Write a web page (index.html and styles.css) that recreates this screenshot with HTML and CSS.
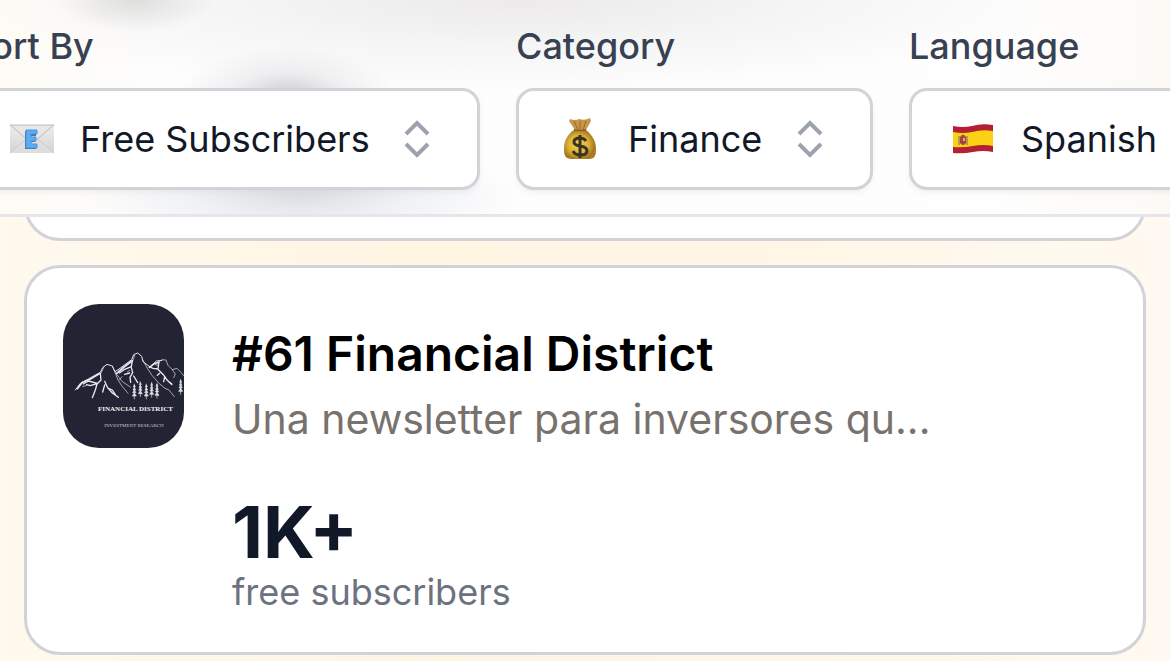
FILE: index.html
```html
<!DOCTYPE html>
<html lang="en">
<head>
<meta charset="utf-8">
<meta name="viewport" content="width=device-width, initial-scale=1">
<title>Newsletters</title>
<link rel="stylesheet" href="styles.css">
</head>
<body>
<header class="filters">
  <form class="filter-row">
    <div class="field">
      <label class="field-label" for="sort">Sort By</label>
      <div class="picker">
        <svg class="emoji" viewBox="0 0 48 48" aria-hidden="true">
          <defs><linearGradient id="paper" x2="0" y2="1"><stop stop-color="#efefef"/><stop offset="1" stop-color="#d3d3d4"/></linearGradient></defs>
          <path d="M2 10h44v28H2z" fill="url(#paper)"/>
          <path d="M2 38 18 24h12l16 14" fill="#dededf" stroke="#cfcecc"/>
          <path d="M2 10l19 16q3 2 6 0l19-16z" fill="#e7e7e8" stroke="#bdbcba"/>
          <path d="M17 16h11v5h-6v2h5v4h-5v3h6v4H17z" fill="#4a7196"/>
          <path d="M18 15h11v4h-6v3h5v4h-5v3h6v4H18z" fill="#5aacf5" stroke="#4a93d6"/>
        </svg>
        <select class="picker-select" id="sort"><option>Free Subscribers</option></select>
        <svg class="chevrons" viewBox="0 0 60 60" aria-hidden="true"><path d="M19 25 30 14 41 25M19 35 30 46 41 35"/></svg>
      </div>
    </div>
    <div class="field">
      <label class="field-label" for="category">Category</label>
      <div class="picker">
        <svg class="emoji" viewBox="0 0 48 48" aria-hidden="true">
          <defs><radialGradient id="gold" cx=".45" cy=".5"><stop stop-color="#f5d34b"/><stop offset=".65" stop-color="#dcb034"/><stop offset="1" stop-color="#a87a22"/></radialGradient></defs>
          <path d="M18 15C12 19 8 25 8 34c0 8 2 10 9 10h15c6 0 8-2 8-10 0-9-5-15-10-19z" fill="url(#gold)"/>
          <path d="M14 4q5 2 9 0 6 2 11-1l1 3-5 9H19L13 6z" fill="#c8964a"/>
          <path d="M18 6l4 9M24 6v9M30 6l-3 9" stroke="#99672c" fill="none"/>
          <path d="M18 14q5 2 12 0v2H18z" fill="#8c5a22"/>
          <path d="M30 26q-2-3-6-3-6 0-6 4 0 3 6 4 7 1 7 5 0 4-7 4-5 0-7-4M24 20v23" fill="none" stroke="#3c3322" stroke-width="3"/>
        </svg>
        <select class="picker-select" id="category"><option>Finance</option></select>
        <svg class="chevrons" viewBox="0 0 60 60" aria-hidden="true"><path d="M19 25 30 14 41 25M19 35 30 46 41 35"/></svg>
      </div>
    </div>
    <div class="field">
      <label class="field-label" for="language">Language</label>
      <div class="picker">
        <svg class="emoji" viewBox="0 0 48 48" aria-hidden="true">
          <path d="M4 11q10 2 19 0 10-3 21-1v27q-10-2-20 0-10 2-20 1z" fill="#b51f34"/>
          <path d="M4 17q10 2 19 0 10-3 21-1v15q-10-2-20 0-10 2-20 1z" fill="#fbd116"/>
          <path d="M10 21v9M18 21v9" stroke="#b3994f" stroke-width="2"/>
          <path d="M11 22h6v6q-3 4-6 0z" fill="#a6443b"/>
          <path d="M11 22q3-5 6 0z" fill="#8c6125"/>
          <path d="M14 23h2v3h-2z" fill="#d9a78a"/>
        </svg>
        <select class="picker-select" id="language"><option>Spanish</option></select>
        <svg class="chevrons" viewBox="0 0 60 60" aria-hidden="true"><path d="M19 25 30 14 41 25M19 35 30 46 41 35"/></svg>
      </div>
    </div>
  </form>
</header>
<main class="list">
  <article class="card card-passed"></article>
  <article class="card">
    <svg class="avatar" viewBox="39 42 363 432" role="img" aria-label="Financial District logo">
      <path fill="#222434" d="M39 42h363v432H39z"/>
      <g fill="none" stroke="#e8e8ee" stroke-linecap="round" stroke-linejoin="round">
        <path stroke-width="3" d="M76 300 92 279 115 267 151 247 158 233 171 223 187 228 195 245 210 235 245 209 251 194 263 189 275 199 279 215 300 231 319 213 336 211"/>
        <path stroke-width="5" d="M82 296 96 278 120 268 150 250M200 250 222 231 246 213M298 232 313 221 328 216"/>
        <path stroke-width="2" d="M187 228 195 247 204 270 215 287 234 310M195 247 217 275 241 291M279 211 292 235 306 256 326 279 345 295 357 300 373 320M336 209 348 210 354 226 367 239 381 235 394 248 402 258M367 239 376 252 371 263"/>
        <path stroke-width="4" d="M151 251 153 270 141 282 136 300 127 323M142 280 116 273 100 282M141 281 121 287 110 284M164 274 173 293 187 309 205 322M164 285 158 306M173 294 187 300 196 314M247 211 244 230 222 239 208 249M244 233 248 248 240 262 242 277M251 258 263 278M239 249 224 253M326 220 324 237 309 235 300 231M325 239 340 254 352 271 366 284M329 250 322 256M344 260 341 275M353 272 365 281"/>
        <path stroke-width="2" d="M162 230 153 250M254 196 248 214M98 290 110 286M208 270 216 260M232 246 239 241M316 224 326 226"/>
      </g>
      <g fill="#dedfe5" stroke="#dedfe5" stroke-width="2">
        <path id="tree" d="M253 281v47M253 284l-3 7h6zM253 292l-4 8h8zM253 300l-5 8h10zM253 309l-6 9h12z"/>
        <use href="#tree" x="18" y="-7"/><use href="#tree" x="36"/><use href="#tree" x="52" y="-5"/><use href="#tree" x="68" y="-2"/><use href="#tree" x="139" y="-14"/>
      </g>
      <text class="logo-name" x="144" y="364">FINANCIAL DISTRICT</text>
      <text class="logo-tag" x="163" y="412">INVESTMENT RESEARCH</text>
    </svg>
    <div class="details">
      <h2 class="title">#61 Financial District</h2>
      <p class="summary">Una newsletter para inversores qu...</p>
      <p class="count">1K+</p>
      <p class="unit">free subscribers</p>
    </div>
  </article>
</main>
</body>
</html>
```
FILE: styles.css
```css
* {
  box-sizing: border-box;
}

body {
  margin: 0;
  min-height: 100vh;
  overflow-x: hidden;
  font-family: Inter, "Liberation Sans", sans-serif;
  background: linear-gradient(90deg, #fff9ee, #fff5e3 35%, #fff6e6 65%, #fff9f1);
}

h2,
p {
  margin: 0;
}

.filters {
  position: sticky;
  top: 0;
  z-index: 1;
  overflow: hidden;
  padding: 22px 24px 24px 0;
  border-bottom: 3px solid #e5e6ea;
  background:
    radial-gradient(ellipse 110px 50px at 288px 96px, #cdced0, rgb(222 223 225 / 45%) 50%, transparent),
    radial-gradient(ellipse 220px 50px at 300px 196px, #dcdfe3, rgb(232 234 238 / 60%) 50%, transparent),
    radial-gradient(ellipse 80px 32px at 135px 0, #dededd, transparent),
    radial-gradient(ellipse 560px 90px at 520px 0, #eceaeb, rgb(242 241 242 / 70%) 50%, transparent),
    linear-gradient(90deg, #fffcf6, #fdfdfe 15%, #fefefe 85%, #fdfaf6);
}

.filter-row {
  display: flex;
  gap: 36px;
  margin-left: -32px;
}

.field {
  flex: none;
}

.field-label {
  display: block;
  margin-bottom: 18px;
  font-size: 36px;
  font-weight: 500;
  line-height: 48px;
  color: #374151;
}

.picker {
  display: flex;
  align-items: center;
  padding: 18px 30px 18px 37px;
  border: 3px solid #d1d3d9;
  border-radius: 18px;
  background: #fff;
  box-shadow: 0 3px 6px rgb(0 0 0 / 5%);
}

.emoji {
  flex: none;
  width: 48px;
  height: 48px;
}

.picker-select {
  appearance: none;
  margin: 0 0 0 24px;
  padding: 0;
  border: 0;
  background: none;
  font: 400 36px/60px Inter, "Liberation Sans", sans-serif;
  height: 60px;
  color: #111827;
}

.chevrons {
  flex: none;
  width: 60px;
  height: 60px;
  margin-left: 17px;
  fill: none;
  stroke: #9ca3af;
  stroke-width: 4;
}

.list {
  display: grid;
  gap: 24px;
  padding: 0 24px;
}

.card {
  display: flex;
  align-items: flex-start;
  gap: 48px;
  padding: 36px;
  border: 3px solid #d1d3d9;
  border-radius: 36px;
  background: #fff;
}

.card-passed {
  margin-top: -54px;
}

.avatar {
  flex: none;
  width: 121px;
  height: 144px;
  border-radius: 36px;
}

.logo-name {
  font: 700 21px "Liberation Serif", serif;
  fill: #f2f2f5;
}

.logo-tag {
  font: 400 15px "Liberation Serif", serif;
  fill: #c9cad2;
}

.details {
  min-width: 0;
  padding-top: 18px;
}

.title {
  font-size: 48px;
  font-weight: 600;
  line-height: 64px;
  color: #000;
}

.summary {
  margin-bottom: 44px;
  font-size: 41px;
  line-height: 66px;
  color: #78716c;
}

.count {
  font-size: 72px;
  font-weight: 700;
  line-height: 72px;
  color: #111827;
}

.unit {
  font-size: 36px;
  line-height: 48px;
  color: #6b7280;
}
```
